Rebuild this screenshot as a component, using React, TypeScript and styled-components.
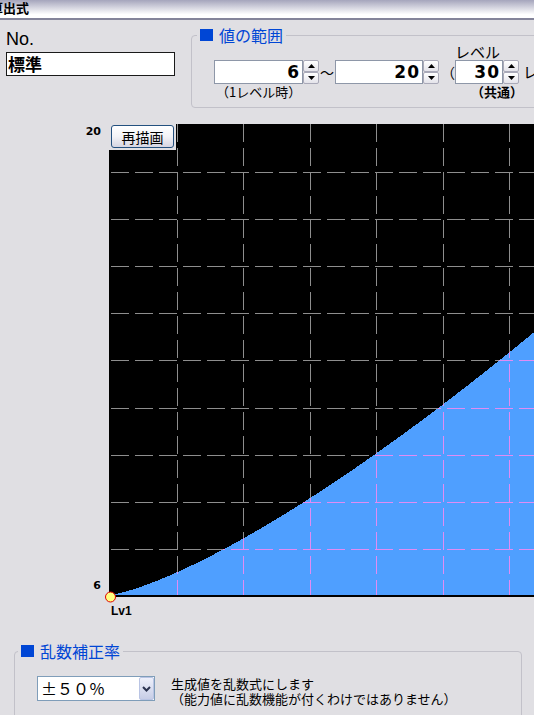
import React from "react";
import styled, { createGlobalStyle } from "styled-components";

const GlobalStyle = createGlobalStyle`
  *, *::before, *::after { box-sizing: border-box; }
  html, body {
    margin: 0;
    padding: 0;
    overflow: hidden;
    background: #e0dfe3;
  }
  body {
    font-family: "Noto Sans CJK JP", "Liberation Sans", sans-serif;
    color: #000;
  }
`;

const Window = styled.div`
  width: 534px;
  height: 715px;
  overflow: hidden;
  background: #e0dfe3;
  display: flex;
  flex-direction: column;
`;

const TitleBar = styled.div`
  flex: none;
  height: 20px;
  background: linear-gradient(#a5a5bc 0%, #ffffff 80%, #ffffff 100%);
  border-bottom: 2px solid #84849a;
  font: bold 13px/16px "Noto Sans CJK JP", sans-serif;
  white-space: nowrap;
  overflow: hidden;
  text-indent: -10px;
`;

const TopSection = styled.div`
  flex: none;
  display: flex;
  align-items: flex-start;
  padding: 6px 0 0 6px;
`;

const NoColumn = styled.div`
  flex: none;
  width: 169px;
  display: flex;
  flex-direction: column;
`;

const NoLabel = styled.div`
  margin-top: 3px;
  font: 18px/20px "Liberation Sans", sans-serif;
`;

const NameBox = styled.div`
  margin-top: 3px;
  height: 24px;
  border: 1px solid #1a1a1a;
  background: #fff;
  padding-left: 1px;
  font: bold 17px/22px "Noto Sans CJK JP", sans-serif;
`;

const Group = styled.fieldset`
  flex: none;
  margin: 0;
  min-width: 0;
  border: 1px solid #c2c1c9;
  border-radius: 4px;
`;

const RangeGroup = styled(Group)`
  width: 420px;
  margin-left: 16px;
  padding: 0 0 7px 5px;
`;

const RandomGroup = styled(Group)`
  width: 508px;
  margin: 24px 0 0 14px;
  padding: 16px 0 30px 3px;
`;

const Legend = styled.legend`
  display: flex;
  align-items: center;
  gap: 6px;
  height: 18px;
  padding: 0 3px;
  font: 16px/18px "Noto Sans CJK JP", sans-serif;
  color: #0046d5;
`;

const LegendMark = styled.span`
  width: 13px;
  height: 12px;
  background: #0046d5;
`;

const RangeRow = styled.div`
  display: flex;
  align-items: flex-start;
  margin-left: 17px;
`;

const Field = styled.div`
  display: flex;
  flex-direction: column;
`;

const TopCaption = styled.div`
  height: 16px;
  font: 15px/16px "Noto Sans CJK JP", sans-serif;
  white-space: nowrap;
`;

const BottomCaption = styled.div<{ $bold?: boolean; $right?: boolean }>`
  height: 16px;
  font: ${(p) => (p.$bold ? "bold" : "normal")} 13px/16px "Noto Sans CJK JP", sans-serif;
  white-space: nowrap;
  padding-left: ${(p) => (p.$right ? 0 : 2)}px;
  text-align: ${(p) => (p.$right ? "right" : "left")};
  margin-right: ${(p) => (p.$right ? -4 : 0)}px;
`;

const SpinBox = styled.div`
  display: flex;
  height: 24px;
`;

const SpinValue = styled.div<{ $width: number }>`
  width: ${(p) => p.$width}px;
  height: 24px;
  border: 1px solid #8e97a8;
  background: #fff;
  padding-right: 2px;
  text-align: right;
  letter-spacing: 1px;
  font: bold 17px/22px "DejaVu Sans", sans-serif;
`;

const SpinButtons = styled.div`
  width: 16px;
  display: flex;
  flex-direction: column;
`;

const SpinButton = styled.div`
  flex: 1;
  display: flex;
  align-items: center;
  justify-content: center;
  border: 1px solid #a9a9b8;
  border-radius: 2px;
  background: linear-gradient(#ffffff, #e4e3ea);
`;

const Connector = styled.div<{ $width: number; $align: "center" | "right" }>`
  width: ${(p) => p.$width}px;
  padding-top: 16px;
  text-align: ${(p) => p.$align};
  font: 14px/24px "Noto Sans CJK JP", sans-serif;
`;

const Trailing = styled.div`
  padding: 16px 0 0 4px;
  font: 15px/24px "Noto Sans CJK JP", sans-serif;
  white-space: nowrap;
`;

const ChartRow = styled.div`
  flex: none;
  display: flex;
  margin-top: 16px;
`;

const AxisColumn = styled.div`
  flex: none;
  width: 109px;
  height: 471px;
  padding: 2px 8px 3px 0;
  display: flex;
  flex-direction: column;
  justify-content: space-between;
  align-items: flex-end;
  font: bold 11px/12px "DejaVu Sans", sans-serif;
`;

const ChartColumn = styled.div`
  flex: none;
  display: flex;
  flex-direction: column;
`;

const Canvas = styled.div`
  position: relative;
  width: 600px;
  height: 473px;
`;

const PlotSvg = styled.svg`
  display: block;
  overflow: visible;
`;

const RedrawFrame = styled.div`
  position: absolute;
  top: 0;
  left: 0;
  padding: 1px 2px 2px 2px;
  background: #e0dfe3;
`;

const RedrawButton = styled.button`
  display: block;
  width: 63px;
  height: 23px;
  padding: 0;
  border: 1px solid #23507f;
  border-radius: 3px;
  background: linear-gradient(#ffffff 0%, #f3f3f7 50%, #d5d5e2 100%);
  font: 14px/20px "Noto Sans CJK JP", sans-serif;
  color: #000;
`;

const LevelLabel = styled.div`
  margin-top: 7px;
  padding-left: 2px;
  font: bold 12px/14px "Liberation Sans", sans-serif;
`;

const RandomRow = styled.div`
  display: flex;
  align-items: flex-start;
  margin-left: 19px;
`;

const Select = styled.div`
  flex: none;
  width: 118px;
  height: 25px;
  border: 1px solid #7f9db9;
  background: #fff;
  display: flex;
`;

const SelectValue = styled.div`
  flex: 1;
  padding-left: 3px;
  font: 16px/23px "Noto Sans CJK JP", sans-serif;
  white-space: nowrap;
`;

const SelectButton = styled.div`
  width: 15px;
  height: 23px;
  display: flex;
  align-items: center;
  justify-content: center;
  border: 1px solid #b9c4e4;
  border-radius: 2px;
  background: linear-gradient(#eef0fb, #c7cde6);
`;

const Description = styled.div`
  margin-left: 16px;
  font: 13px/15px "Noto Sans CJK JP", sans-serif;
  white-space: nowrap;
`;

const ArrowIcon = ({ up }: { up?: boolean }) => (
  <svg width="7" height="4" viewBox="0 0 7 4">
    <polygon points={up ? "3.5,0 7,4 0,4" : "0,0 7,0 3.5,4"} fill="#000" />
  </svg>
);

const Chevron = () => (
  <svg width="9" height="6" viewBox="0 0 9 6">
    <polyline points="1,1 4.5,4.5 8,1" fill="none" stroke="#2b3350" strokeWidth="2" />
  </svg>
);

type SpinProps = { value: number; width: number };

const Spin = ({ value, width }: SpinProps) => (
  <SpinBox>
    <SpinValue $width={width}>{value}</SpinValue>
    <SpinButtons>
      <SpinButton>
        <ArrowIcon up />
      </SpinButton>
      <SpinButton>
        <ArrowIcon />
      </SpinButton>
    </SpinButtons>
  </SpinBox>
);

// Plot geometry: 10 value bands tall, level columns every ~66px
const PLOT_W = 600;
const PLOT_H = 471;
const colX = Array.from({ length: 9 }, (_, i) => Math.round(1.6 + 66.4 * (i + 1)) + 0.5);
const rowY = Array.from({ length: 9 }, (_, i) => Math.round(0.9 + 47.1 * (i + 1)) + 0.5);

const curveY = (t: number) => Math.round(PLOT_H - 23 * Math.pow(t / 68, 1.33));

const areaPath = (() => {
  let d = `M0,${PLOT_H}`;
  for (let t = 0; t <= PLOT_W; t++) {
    const y = curveY(t);
    d += ` L${t},${y} L${t + 1},${y}`;
  }
  d += ` L${PLOT_W + 1},${PLOT_H} Z`;
  return d;
})();

const GridLines = ({ color }: { color: string }) => (
  <g stroke={color} strokeWidth="1" shapeRendering="crispEdges">
    {rowY.map((y) => (
      <line key={`h${y}`} x1="2" y1={y} x2={PLOT_W} y2={y} strokeDasharray="18 6" />
    ))}
    {colX.map((x) => (
      <line key={`v${x}`} x1={x} y1="0" x2={x} y2={PLOT_H} strokeDasharray="18 6" />
    ))}
  </g>
);

const GrowthChart = () => (
  <PlotSvg width={PLOT_W} height={PLOT_H + 2}>
    <defs>
      <clipPath id="areaClip">
        <path d={areaPath} />
      </clipPath>
    </defs>
    <rect x="0" y="0" width={PLOT_W} height={PLOT_H} fill="#000" />
    <GridLines color="#8e8e8e" />
    <path d={areaPath} fill="#4f9fff" shapeRendering="crispEdges" />
    <g clipPath="url(#areaClip)">
      <GridLines color="#e08cf4" />
    </g>
    <rect x="0" y={PLOT_H} width={PLOT_W} height="2" fill="#000" />
    <circle cx="1.5" cy="473" r="5" fill="#ffff80" stroke="#e00000" strokeWidth="1" />
  </PlotSvg>
);

export default function App() {
  return (
    <>
      <GlobalStyle />
      <Window>
        <TitleBar>算出式</TitleBar>

        <TopSection>
          <NoColumn>
            <NoLabel>No.</NoLabel>
            <NameBox>標準</NameBox>
          </NoColumn>

          <RangeGroup>
            <Legend>
              <LegendMark />
              値の範囲
            </Legend>
            <RangeRow>
              <Field>
                <TopCaption />
                <Spin value={6} width={89} />
                <BottomCaption>（1レベル時）</BottomCaption>
              </Field>
              <Connector $width={16} $align="center">〜</Connector>
              <Field>
                <TopCaption />
                <Spin value={20} width={88} />
                <BottomCaption />
              </Field>
              <Connector $width={16} $align="right">（</Connector>
              <Field>
                <TopCaption>レベル</TopCaption>
                <Spin value={30} width={48} />
                <BottomCaption $bold $right>（共通）</BottomCaption>
              </Field>
              <Trailing>レベル）</Trailing>
            </RangeRow>
          </RangeGroup>
        </TopSection>

        <ChartRow>
          <AxisColumn>
            <span>20</span>
            <span>6</span>
          </AxisColumn>
          <ChartColumn>
            <Canvas>
              <GrowthChart />
              <RedrawFrame>
                <RedrawButton type="button">再描画</RedrawButton>
              </RedrawFrame>
            </Canvas>
            <LevelLabel>Lv1</LevelLabel>
          </ChartColumn>
        </ChartRow>

        <RandomGroup>
          <Legend>
            <LegendMark />
            乱数補正率
          </Legend>
          <RandomRow>
            <Select>
              <SelectValue>±５０％</SelectValue>
              <SelectButton>
                <Chevron />
              </SelectButton>
            </Select>
            <Description>
              生成値を乱数式にします
              <br />
              （能力値に乱数機能が付くわけではありません）
            </Description>
          </RandomRow>
        </RandomGroup>
      </Window>
    </>
  );
}
